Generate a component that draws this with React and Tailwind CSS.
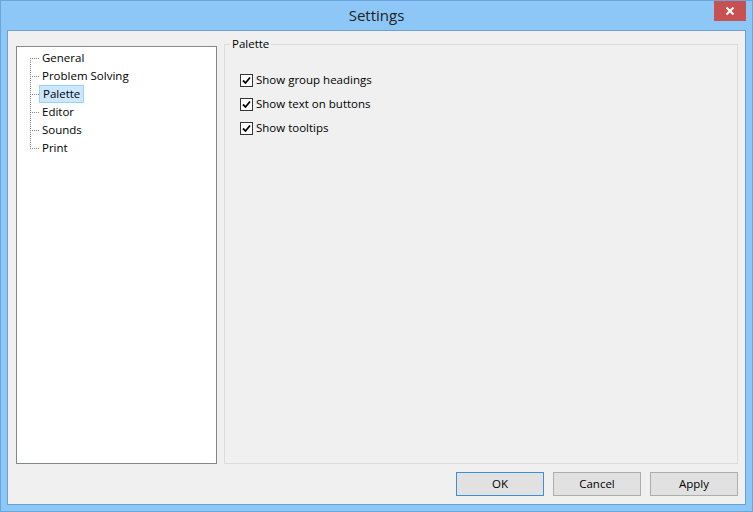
import React from 'react';

const treeItems = ['General', 'Problem Solving', 'Palette', 'Editor', 'Sounds', 'Print'];
const options = ['Show group headings', 'Show text on buttons', 'Show tooltips'];

function CheckBox() {
  return (
    <span className="w-[13px] h-[13px] border border-[#333] bg-white flex items-center justify-center shrink-0">
      <svg width="9" height="9" viewBox="0 0 9 9">
        <path d="M1 4.5 L3.5 7 L8 1.5" fill="none" stroke="#000" strokeWidth="1.8" />
      </svg>
    </span>
  );
}

export default function App() {
  return (
    <div
      className="w-[753px] h-[512px] bg-[#8cc7f8] border border-[#6aa6da] flex flex-col text-[11.5px] text-black"
      style={{ fontFamily: '"Open Sans", "Noto Sans", sans-serif' }}
    >
      {/* Title bar */}
      <div className="relative h-[29px] flex items-center justify-center shrink-0">
        <span className="text-[15px] text-[#222]">Settings</span>
        <button className="absolute right-[6px] top-0 w-[32px] h-[20px] bg-[#c75050] flex items-center justify-center">
          <svg width="10" height="10" viewBox="0 0 10 10">
            <path d="M1.5 1.5 L8.5 8.5 M8.5 1.5 L1.5 8.5" stroke="#fff" strokeWidth="2" />
          </svg>
        </button>
      </div>

      {/* Client area */}
      <div className="flex-1 mx-[6px] mb-[6px] bg-[#f0f0f0] border border-[#6f9fcb] flex flex-col pl-[8px] pr-[7px] pt-[14px] pb-[8px]">
        <div className="flex-1 flex gap-[7px]">
          {/* Tree */}
          <div className="w-[201px] h-[418px] mt-[1px] bg-white border border-[#828790] pt-[2px] pl-[13px]">
            <div className="relative">
              <div className="absolute left-[0px] top-[9px] h-[91px] border-l border-dotted border-[#888]" />
              {treeItems.map((item) => (
                <div key={item} className="h-[18px] flex items-center">
                  <span className="w-[9px] border-t border-dotted border-[#888]" />
                  {item === 'Palette' ? (
                    <span className="px-[3px] h-[18px] leading-[16px] bg-[#cce8ff] border border-[#99d1ff]">
                      {item}
                    </span>
                  ) : (
                    <span className="ml-[1px] px-[2px]">{item}</span>
                  )}
                </div>
              ))}
            </div>
          </div>

          {/* Group box */}
          <div className="flex-1 h-[420px] relative border border-[#dcdcdc] mt-[-1px]">
            <span className="absolute left-[5px] top-[-10px] px-[2px] bg-[#f0f0f0] leading-[18px]">Palette</span>
            <div className="pt-[26px] pl-[15px] flex flex-col gap-[6px]">
              {options.map((o) => (
                <label key={o} className="flex items-center gap-[3px] h-[18px]">
                  <CheckBox />
                  <span>{o}</span>
                </label>
              ))}
            </div>
          </div>
        </div>

        {/* Buttons */}
        <div className="flex justify-end gap-[9px] mt-[8px]">
          <button className="w-[88px] h-[24px] bg-[#e1e1e1] border border-[#3c8ddb]">OK</button>
          <button className="w-[88px] h-[24px] bg-[#e1e1e1] border border-[#adadad]">Cancel</button>
          <button className="w-[88px] h-[24px] bg-[#e1e1e1] border border-[#adadad]">Apply</button>
        </div>
      </div>
    </div>
  );
}
